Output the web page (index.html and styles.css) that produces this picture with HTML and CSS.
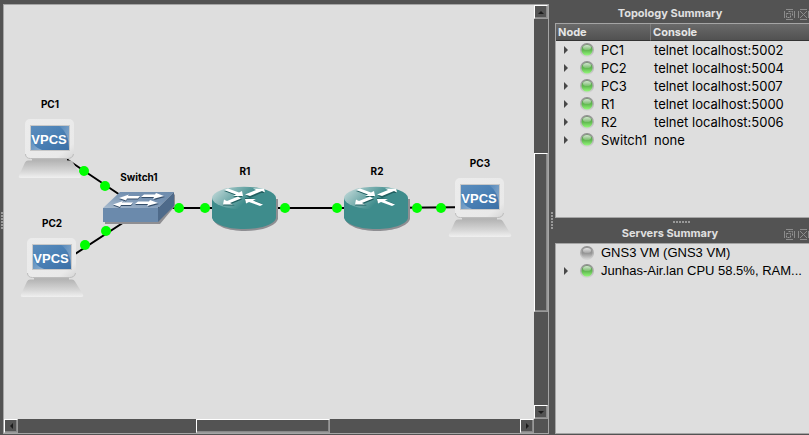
FILE: index.html
```html
<!DOCTYPE html>
<html lang="en">
<head>
<meta charset="utf-8">
<title>GNS3</title>
<link rel="stylesheet" href="styles.css">
</head>
<body>
<svg class="defs" aria-hidden="true">
  <defs>
    <linearGradient id="screen" x1="0" y1="0" x2="1" y2="1">
      <stop offset="0" stop-color="#5b8dbd"/><stop offset=".5" stop-color="#4a80b5"/><stop offset="1" stop-color="#3c70a6"/>
    </linearGradient>
    <linearGradient id="shine" x1="0" y1="0" x2="1" y2="1">
      <stop offset="0" stop-color="#fff" stop-opacity=".05"/><stop offset="1" stop-color="#fff" stop-opacity=".4"/>
    </linearGradient>
    <linearGradient id="case" x1="0" y1="0" x2="1" y2="1">
      <stop offset="0" stop-color="#ececec"/><stop offset=".8" stop-color="#e9e9e9"/><stop offset="1" stop-color="#d4d4d4"/>
    </linearGradient>
    <linearGradient id="base" x1="0" y1="0" x2="0" y2="1">
      <stop offset="0" stop-color="#b4b4b4"/><stop offset=".6" stop-color="#d6d6d6"/><stop offset="1" stop-color="#f0f0f0"/>
    </linearGradient>
    <linearGradient id="lid" x1="0" y1=".4" x2=".55" y2=".6">
      <stop offset="0" stop-color="#b2d0d0"/><stop offset="1" stop-color="#3e8c8c"/>
    </linearGradient>
    <linearGradient id="deck" x1="0" y1="1" x2="1" y2="0">
      <stop offset="0" stop-color="#a9bccf"/><stop offset=".6" stop-color="#7591b1"/><stop offset="1" stop-color="#6e8cad"/>
    </linearGradient>
    <linearGradient id="ring" x1="0" y1="0" x2="0" y2="1">
      <stop offset="0" stop-color="#8d8d8d"/><stop offset="1" stop-color="#d6d6d6"/>
    </linearGradient>
    <linearGradient id="on" x1="0" y1="0" x2="0" y2="1">
      <stop offset="0" stop-color="#5f9f55"/><stop offset=".5" stop-color="#5fb64f"/><stop offset="1" stop-color="#92f878"/>
    </linearGradient>
    <linearGradient id="off" x1="0" y1="0" x2="0" y2="1">
      <stop offset="0" stop-color="#999"/><stop offset=".5" stop-color="#939393"/><stop offset="1" stop-color="#cdcdcd"/>
    </linearGradient>
    <linearGradient id="gloss" x1="0" y1="0" x2="0" y2="1">
      <stop offset="0" stop-color="#fff" stop-opacity=".75"/><stop offset="1" stop-color="#fff" stop-opacity=".15"/>
    </linearGradient>
    <symbol id="pc" viewBox="0 0 64 62">
      <path d="M14 40h35v3H14z" fill="#b5b5b5"/>
      <path d="M10 41.500h42q2 0 3 2l8 13q1 2.500-2 2.500H3q-3 0-2-2.500l6-13q1-2 3-2z" fill="url(#base)"/>
      <rect x="7" y="0" width="49" height="40" rx="5" fill="url(#case)"/>
      <path d="M7.500 35q0 4.500 5 4.500h37q5 0 6-4.500" fill="none" stroke="#bdbdbd"/>
      <rect x="12" y="6" width="40" height="26" fill="#c8c8c8"/>
      <rect x="13" y="7" width="38" height="24" fill="url(#screen)"/>
      <path d="M41 7h10v22q0-15-10-22z" fill="url(#shine)"/>
      <path d="M13 19q2 9 11 12H13z" fill="url(#shine)"/>
      <text class="screen-text" x="31" y="25" text-anchor="middle">VPCS</text>
    </symbol>
    <symbol id="router" viewBox="0 0 68 46">
      <path d="M2 13v20c2 7 15 12 32 12s31-5 33-12V13z" fill="#8e8e92"/>
      <path d="M1 12v20c2 6 14 11 32 11s31-5 32-11V12z" fill="#3e8c8c"/>
      <ellipse cx="33" cy="12" rx="32" ry="11.3" fill="url(#lid)"/>
      <path d="M13 5l4-1.500 11 4 3-1.500V11H22l3-1.500zM35 9.500l11-4.500-3-1.500 9 .5 2 3-4 0-11 5zM31 13.500l-11 4.500 4 1.500H12l2-5 3 1.500 11-4.500zM34 12l11 1-3 1.500 9 3-3 1.500-11-4-3 1.500z" fill="#205f60"/>
      <path d="M13 4l4-1.500 11 4 3-1.500 1 5h-10l3-1.500zM34 8.500l11-4.500-3-1.500h11l1 4-3-1.500-12 5zM30 12.500l-11 4.500 3 1.500H12l1-5 3 1.500 11-4.500zM34 13h11l-3 1.500 10 4-3 1.500-11-4-3 1.500z" fill="#fff"/>
    </symbol>
    <symbol id="switch" viewBox="0 0 74 34">
      <path d="M3 18h54L73 2v12L58 32H3z" fill="#8e8e92"/>
      <path d="M1 16L18 0h54L56 16z" fill="url(#deck)"/>
      <path d="M1 16h55v14H1z" fill="#6b8aac"/>
      <path d="M56 16L72 0v14L56 30z" fill="#4e6a8a"/>
      <path d="M42 3.500h11l1-1.500 9 3-11 3 1-2H39zM36 10.500h11l1-1.500 9 3-11 3 1-2H33zM38 5H26l1-1.500-10 3.500 7 2.500 1-2h11zM31 11.500H20l1-1.500-10 3.500 7 2.500 1-2h10z" fill="#344d69"/>
      <path d="M42 2.500h11l1-1.500 8 3-11 3 1-2H39zM36 9.500h11l1-1.500 8 3-11 3 1-2H33zM38 4H26l1-1.500-10 3.500 7 2.500 1-2h11zM31 10.500H20l1-1.500-10 3.500 7 2.500 1-2h10z" fill="#fff"/>
    </symbol>
    <symbol id="led-on" viewBox="0 0 14 14">
      <circle cx="7" cy="7" r="7" fill="url(#ring)"/><circle cx="7" cy="7" r="5.5" fill="url(#on)"/>
      <ellipse cx="7" cy="4.5" rx="4" ry="2.6" fill="url(#gloss)"/>
    </symbol>
    <symbol id="led-off" viewBox="0 0 14 14">
      <circle cx="7" cy="7" r="7" fill="url(#ring)"/><circle cx="7" cy="7" r="5.5" fill="url(#off)"/>
      <ellipse cx="7" cy="4.5" rx="4" ry="2.6" fill="url(#gloss)"/>
    </symbol>
    <symbol id="float" viewBox="0 0 11 11">
      <path d="M2 .5h7M2 10.500h7M.5 2v7M10.500 2v7" fill="none" stroke="#8c8c8c"/>
      <path d="M4.500 2.500h4v4M2.500 4.500h4v4h-4z" fill="none" stroke="#999" stroke-dasharray="2 1"/>
    </symbol>
    <symbol id="close" viewBox="0 0 11 11">
      <path d="M2 .5h7M2 10.500h7M.5 2v7M10.500 2v7M2 2l7 7M9 2L2 9" fill="none" stroke="#8c8c8c"/>
    </symbol>
  </defs>
</svg>

<div class="window">
  <div class="grip grip-v" aria-hidden="true"></div>
  <main class="workspace">
    <div class="canvas">
      <svg class="links" aria-hidden="true">
        <g stroke="#000" stroke-width="2">
          <path d="M46 143L134 202M48 264L134 208M134 203H241M241 203H373M373 203L475 202"/>
        </g>
        <g fill="#0f0">
          <circle cx="80" cy="166" r="5"/><circle cx="101" cy="181" r="5"/>
          <circle cx="81" cy="240" r="5"/><circle cx="102" cy="226" r="5"/>
          <circle cx="175" cy="203" r="5"/><circle cx="201" cy="203" r="5"/>
          <circle cx="281" cy="203" r="5"/><circle cx="333" cy="203" r="5"/>
          <circle cx="413" cy="203" r="5"/><circle cx="437" cy="203" r="5"/>
        </g>
      </svg>
      <div class="node pc pc1"><span>PC1</span><svg><use href="#pc"/></svg></div>
      <div class="node pc pc2"><span>PC2</span><svg><use href="#pc"/></svg></div>
      <div class="node switch sw1"><span>Switch1</span><svg><use href="#switch"/></svg></div>
      <div class="node router r1"><span>R1</span><svg><use href="#router"/></svg></div>
      <div class="node router r2"><span>R2</span><svg><use href="#router"/></svg></div>
      <div class="node pc pc3"><span>PC3</span><svg><use href="#pc"/></svg></div>
    </div>
    <div class="bar bar-v">
      <button class="step up" aria-label="Scroll up"></button>
      <div class="track"><div class="thumb"></div></div>
      <button class="step down" aria-label="Scroll down"></button>
    </div>
    <div class="bar bar-h">
      <button class="step left" aria-label="Scroll left"></button>
      <div class="track"><div class="thumb"></div></div>
      <button class="step right" aria-label="Scroll right"></button>
    </div>
  </main>
  <div class="grip grip-v" aria-hidden="true"></div>
  <aside class="docks">
    <section class="dock topology">
      <header><h2>Topology Summary</h2>
        <button class="tool" aria-label="Float"><svg><use href="#float"/></svg></button>
        <button class="tool" aria-label="Close"><svg><use href="#close"/></svg></button>
      </header>
      <div class="tree">
        <table>
          <thead><tr><th class="name">Node</th><th>Console</th></tr></thead>
          <tbody>
            <tr><td><div class="item"><i class="arrow"></i><svg class="led"><use href="#led-on"/></svg>PC1</div></td><td>telnet localhost:5002</td></tr>
            <tr><td><div class="item"><i class="arrow"></i><svg class="led"><use href="#led-on"/></svg>PC2</div></td><td>telnet localhost:5004</td></tr>
            <tr><td><div class="item"><i class="arrow"></i><svg class="led"><use href="#led-on"/></svg>PC3</div></td><td>telnet localhost:5007</td></tr>
            <tr><td><div class="item"><i class="arrow"></i><svg class="led"><use href="#led-on"/></svg>R1</div></td><td>telnet localhost:5000</td></tr>
            <tr><td><div class="item"><i class="arrow"></i><svg class="led"><use href="#led-on"/></svg>R2</div></td><td>telnet localhost:5006</td></tr>
            <tr><td><div class="item"><i class="arrow"></i><svg class="led"><use href="#led-on"/></svg>Switch1</div></td><td>none</td></tr>
          </tbody>
        </table>
      </div>
    </section>
    <div class="grip grip-h" aria-hidden="true"></div>
    <section class="dock servers">
      <header><h2>Servers Summary</h2>
        <button class="tool" aria-label="Float"><svg><use href="#float"/></svg></button>
        <button class="tool" aria-label="Close"><svg><use href="#close"/></svg></button>
      </header>
      <div class="tree">
        <div class="item"><i class="arrow leaf"></i><svg class="led"><use href="#led-off"/></svg>GNS3 VM (GNS3 VM)</div>
        <div class="item"><i class="arrow"></i><svg class="led"><use href="#led-on"/></svg>Junhas-Air.lan CPU 58.5%, RAM...</div>
      </div>
    </section>
  </aside>
</div>
</body>
</html>
```
FILE: styles.css
```css
* { box-sizing: border-box; }

body {
  margin: 0;
  background: #535353;
  color: #000;
  font: 13px/18px Inter, "Liberation Sans", sans-serif;
}

.defs { position: absolute; width: 0; height: 0; }

.window {
  display: grid;
  grid-template-columns: 3px minmax(0, 1fr) 6px 254px;
  height: 100vh;
}

button { padding: 0; border: 0; background: none; }

/* splitter handles */
.grip { align-self: center; justify-self: center; }
.grip-v {
  width: 2px;
  height: 18px;
  margin-top: 6px;
  background: repeating-linear-gradient(#999 0 2px, transparent 2px 3px);
}
.grip-h {
  width: 18px;
  height: 2px;
  background: repeating-linear-gradient(90deg, #999 0 2px, transparent 2px 3px);
}

/* drawing area */
.workspace {
  display: grid;
  grid-template: minmax(0, 1fr) 14px / minmax(0, 1fr) 14px;
  margin: 4px 0 1px;
  border: 1px solid #a5a5a5;
}
.canvas { position: relative; overflow: hidden; background: #dedede; }
.links { position: absolute; width: 100%; height: 100%; }

.node {
  position: absolute;
  display: flex;
  flex-direction: column;
  align-items: center;
  gap: 9px;
  font-size: 10px;
  line-height: 12px;
  font-weight: 700;
}
.node svg { display: block; }
.screen-text { font: 700 13px "Liberation Sans", sans-serif; fill: #fff; }
.pc svg { width: 64px; height: 62px; }
.router svg { width: 68px; height: 46px; }
.switch svg { width: 74px; height: 34px; }
.pc1 { left: 14px; top: 93px; }
.pc2 { left: 16px; top: 212px; }
.pc3 { left: 444px; top: 152px; }
.sw1 { left: 98px; top: 166px; }
.r1 { left: 207px; top: 160px; }
.r2 { left: 339px; top: 160px; }

/* scroll bars */
.bar { display: flex; background: #535353; }
.bar-v { flex-direction: column; }
.step {
  display: grid;
  place-items: center;
  width: 14px;
  height: 14px;
  flex: none;
}
.step, .thumb {
  border: 1px solid;
  border-color: #fff #999 #999 #fff;
  box-shadow: inset -1px -1px #888;
}
.step::before { content: ""; border: 3px solid transparent; }
.up::before { border-bottom-color: #1c1c1c; border-top-width: 0; }
.down::before { border-top-color: #1c1c1c; border-bottom-width: 0; }
.left::before { border-right-color: #1c1c1c; border-left-width: 0; }
.right::before { border-left-color: #1c1c1c; border-right-width: 0; }
.track { display: flex; flex: 1; }
.bar-v .track { flex-direction: column; }
.bar-v .track::before { content: ""; flex: 135; }
.bar-v .thumb { flex: 158; }
.bar-v .track::after { content: ""; flex: 93; }
.bar-h .track::before { content: ""; flex: 179; }
.bar-h .thumb { flex: 132; }
.bar-h .track::after { content: ""; flex: 191; }

/* docks */
.docks {
  display: grid;
  grid-template-rows: minmax(0, 218fr) 8px minmax(0, 208fr);
  grid-template-columns: minmax(0, 1fr);
  padding-bottom: 1px;
}
.dock { display: flex; flex-direction: column; min-height: 0; }
.dock header {
  display: flex;
  align-items: center;
  gap: 3px;
  height: 17px;
  flex: none;
}
.topology header { margin-top: 6px; }
h2 {
  flex: 1;
  margin: 0;
  padding: 0 0 2px 4px;
  color: #e0e0e0;
  font-size: 11px;
  line-height: 15px;
  font-weight: 700;
  text-align: center;
}
.tool, .tool svg { display: block; width: 11px; height: 11px; }
.tree {
  flex: 1;
  min-height: 0;
  overflow: hidden;
  border: 1px solid #a5a5a5;
  border-right: 0;
  background: #dedede;
}
.servers .tree { font-family: "Liberation Sans", sans-serif; }
table { width: 100%; border-spacing: 0; table-layout: fixed; }
th {
  height: 17px;
  padding: 0 2px;
  border-bottom: 1px solid #333;
  background: linear-gradient(#6a6a6a, #515151);
  color: #e6e6e6;
  font-size: 11px;
  line-height: 16px;
  text-align: left;
}
.name { width: 95px; border-right: 1px solid #7d7d7d; }
td { height: 18px; padding: 0 3px; white-space: nowrap; }
td:first-child { padding: 0; }
.item {
  display: flex;
  align-items: center;
  height: 18px;
  white-space: nowrap;
}
.arrow {
  width: 4px;
  margin: 0 12px 0 8px;
  border: solid transparent;
  border-width: 4px 0 4px 4px;
  border-left-color: #484848;
}
.leaf { visibility: hidden; }
.led { width: 14px; height: 14px; margin-right: 7px; flex: none; }
```
